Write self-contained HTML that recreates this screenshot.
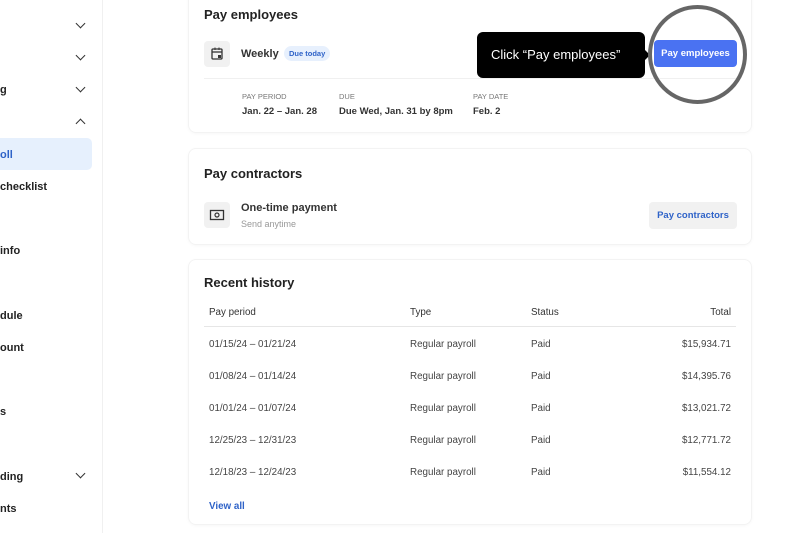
<!DOCTYPE html>
<html><head><style>
*{margin:0;padding:0;box-sizing:border-box}
body{width:800px;height:533px;overflow:hidden;background:#fff;font-family:"Liberation Sans",sans-serif;color:#1f1f1f;position:relative}
.side{position:absolute;left:0;top:0;width:103px;height:533px;border-right:1px solid #f0f0f0}
.si{position:absolute;left:0;font-size:11px;font-weight:bold;color:#222}
.chev{position:absolute;left:77px;width:7px;height:7px;border-right:1.6px solid #333;border-bottom:1.6px solid #333;transform:rotate(45deg)}
.up{transform:rotate(-135deg)}
.card{position:absolute;left:188px;width:564px;border:1px solid #f3f3f3;border-radius:8px;box-shadow:0 1px 3px rgba(0,0,0,.03)}
.h{position:absolute;left:15px;font-size:13px;font-weight:bold;color:#222}
.ic{position:absolute;left:15px;width:26px;height:26px;background:#f1f1f1;border-radius:4px}
.lab{position:absolute;font-size:7.5px;color:#777;letter-spacing:0}
.val{position:absolute;font-size:9.5px;font-weight:bold;color:#333}
.t{position:absolute;font-size:9.8px;color:#444}
</style></head><body>
<div class="side">
<div class="chev" style="top:20px"></div>
<div class="chev" style="top:52px"></div>
<div class="si" style="top:84px">g</div><div class="chev" style="top:84px"></div>
<div class="chev up" style="top:120px"></div>
<div style="position:absolute;left:0;top:138px;width:92px;height:32px;background:#e6f0fd;border-radius:0 5px 5px 0"></div>
<div class="si" style="top:149px;color:#2f63c8">oll</div>
<div class="si" style="top:181px">checklist</div>
<div class="si" style="top:245px">info</div>
<div class="si" style="top:310px">dule</div>
<div class="si" style="top:342px">ount</div>
<div class="si" style="top:406px">s</div>
<div class="si" style="top:471px">ding</div><div class="chev" style="top:470px"></div>
<div class="si" style="top:503px">nts</div>
</div>

<div class="card" style="top:-10px;height:143px">
<div class="h" style="top:16px">Pay employees</div>
<div class="ic" style="top:50px"><svg width="26" height="26"><rect x="8" y="8" width="10" height="10" rx="1" fill="none" stroke="#333" stroke-width="1.3"/><line x1="8" y1="11" x2="18" y2="11" stroke="#333" stroke-width="1.3"/><line x1="11" y1="6.5" x2="11" y2="9" stroke="#333"/><line x1="15" y1="6.5" x2="15" y2="9" stroke="#333"/><rect x="14" y="14" width="3" height="3" fill="#333"/></svg></div>
<div class="val" style="left:52px;top:57px;font-size:11px">Weekly</div>
<div style="position:absolute;left:95px;top:55px;background:#e7f0fd;color:#2f63c8;font-size:7.5px;font-weight:bold;padding:3px 5px;border-radius:8px">Due today</div>
<div style="position:absolute;left:15px;right:15px;top:87px;border-top:1px solid #f0f0f0"></div>
<div class="lab" style="left:53px;top:101px">PAY PERIOD</div><div class="val" style="left:53px;top:115px">Jan. 22 – Jan. 28</div>
<div class="lab" style="left:150px;top:101px">DUE</div><div class="val" style="left:150px;top:115px">Due Wed, Jan. 31 by 8pm</div>
<div class="lab" style="left:284px;top:101px">PAY DATE</div><div class="val" style="left:284px;top:115px">Feb. 2</div>
</div>

<div class="card" style="top:148px;height:97px">
<div class="h" style="top:17px">Pay contractors</div>
<div class="ic" style="top:53px"><svg width="26" height="26"><rect x="6.5" y="8.5" width="13" height="9" fill="none" stroke="#333" stroke-width="1.3"/><circle cx="13" cy="13" r="2" fill="none" stroke="#333" stroke-width="1.2"/></svg></div>
<div class="val" style="left:52px;top:53px;font-size:11px">One-time payment</div>
<div class="t" style="left:52px;top:70px;font-size:9px;color:#999">Send anytime</div>
<div style="position:absolute;left:460px;top:53px;width:88px;height:27px;background:#f1f1f1;border-radius:4px;color:#2f63c8;font-size:9.5px;font-weight:bold;text-align:center;line-height:27px">Pay contractors</div>
</div>

<div class="card" style="top:259px;height:266px">
<div class="h" style="top:15px">Recent history</div>
<div class="t" style="left:20px;top:47px;color:#333">Pay period</div>
<div class="t" style="left:221px;top:47px;color:#333">Type</div>
<div class="t" style="left:342px;top:47px;color:#333">Status</div>
<div class="t" style="right:20px;top:47px;color:#333">Total</div>
<div style="position:absolute;left:15px;right:15px;top:66px;border-top:1.5px solid #e6e6e6"></div>
<div class="t" style="left:20px;top:79px">01/15/24 – 01/21/24</div><div class="t" style="left:221px;top:79px">Regular payroll</div><div class="t" style="left:342px;top:79px">Paid</div><div class="t" style="right:20px;top:79px">$15,934.71</div>
<div class="t" style="left:20px;top:111px">01/08/24 – 01/14/24</div><div class="t" style="left:221px;top:111px">Regular payroll</div><div class="t" style="left:342px;top:111px">Paid</div><div class="t" style="right:20px;top:111px">$14,395.76</div>
<div class="t" style="left:20px;top:143px">01/01/24 – 01/07/24</div><div class="t" style="left:221px;top:143px">Regular payroll</div><div class="t" style="left:342px;top:143px">Paid</div><div class="t" style="right:20px;top:143px">$13,021.72</div>
<div class="t" style="left:20px;top:175px">12/25/23 – 12/31/23</div><div class="t" style="left:221px;top:175px">Regular payroll</div><div class="t" style="left:342px;top:175px">Paid</div><div class="t" style="right:20px;top:175px">$12,771.72</div>
<div class="t" style="left:20px;top:207px">12/18/23 – 12/24/23</div><div class="t" style="left:221px;top:207px">Regular payroll</div><div class="t" style="left:342px;top:207px">Paid</div><div class="t" style="right:20px;top:207px">$11,554.12</div>
<div class="t" style="left:20px;top:241px;color:#2f63c8;font-weight:bold">View all</div>
</div>

<div style="position:absolute;left:477px;top:32px;width:168px;height:46px;background:#000;border-radius:6px;color:#fff;font-size:13px;line-height:46px;padding-left:14px">Click “Pay employees”</div>
<div style="position:absolute;left:645px;top:50px;width:0;height:0;border-top:5px solid transparent;border-bottom:5px solid transparent;border-left:5px solid #000"></div>
<div style="position:absolute;left:654px;top:40px;width:83px;height:27px;background:#4a72f2;border-radius:4px;color:#fff;font-size:9.5px;font-weight:bold;text-align:center;line-height:27px">Pay employees</div>
<div style="position:absolute;left:648px;top:5px;width:99px;height:99px;border:4px solid #666;border-radius:50%"></div>
</body></html>
